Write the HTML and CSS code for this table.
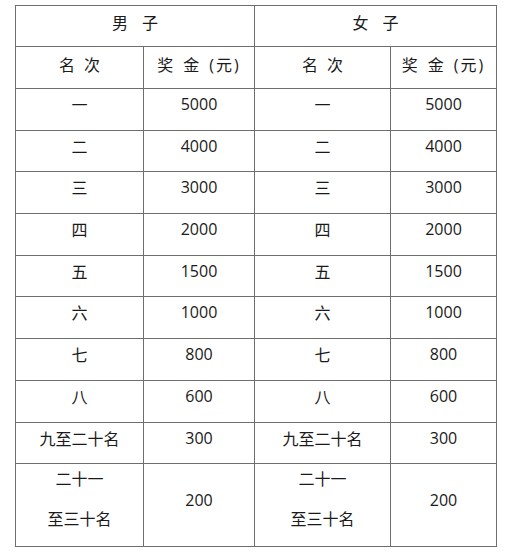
FILE: index.html
```html
<!DOCTYPE html>
<html lang="zh">
<head>
<meta charset="utf-8">
<link rel="stylesheet" href="styles.css">
</head>
<body>
<div class="table">
  <div class="cell head span2"><span class="ls14">男子</span></div>
  <div class="cell head span2"><span class="ls14">女子</span></div>

  <div class="cell head"><span class="ls9">名次</span></div>
  <div class="cell head"><span class="prize"><span class="g">奖</span><span class="g">金</span>(元)</span></div>
  <div class="cell head"><span class="ls9">名次</span></div>
  <div class="cell head"><span class="prize"><span class="g">奖</span><span class="g">金</span>(元)</span></div>

  <div class="cell">一</div><div class="cell">5000</div><div class="cell">一</div><div class="cell">5000</div>
  <div class="cell">二</div><div class="cell">4000</div><div class="cell">二</div><div class="cell">4000</div>
  <div class="cell">三</div><div class="cell">3000</div><div class="cell">三</div><div class="cell">3000</div>
  <div class="cell">四</div><div class="cell">2000</div><div class="cell">四</div><div class="cell">2000</div>
  <div class="cell">五</div><div class="cell">1500</div><div class="cell">五</div><div class="cell">1500</div>
  <div class="cell">六</div><div class="cell">1000</div><div class="cell">六</div><div class="cell">1000</div>
  <div class="cell">七</div><div class="cell">800</div><div class="cell">七</div><div class="cell">800</div>
  <div class="cell">八</div><div class="cell">600</div><div class="cell">八</div><div class="cell">600</div>
  <div class="cell">九至二十名</div><div class="cell">300</div><div class="cell">九至二十名</div><div class="cell">300</div>

  <div class="cell two"><span>二十一</span><span>至三十名</span></div>
  <div class="cell">200</div>
  <div class="cell two"><span>二十一</span><span>至三十名</span></div>
  <div class="cell">200</div>
</div>
</body>
</html>
```

FILE: styles.css
```css
html, body {
  margin: 0;
  padding: 0;
  background: #ffffff;
}

body {
  font-family: "Open Sans", "Noto Sans CJK SC", sans-serif;
  font-size: 16px;
  color: #1a1a1a;
}

.table {
  margin: 5px 0 0 15px;
  width: 482px;
  box-sizing: border-box;
  display: grid;
  grid-template-columns: 127px 110px 135px 105px;
  grid-template-rows: 40px 41px 41px 40px 41px 41px 40px 41px 41px 41px 40px 82px;
  gap: 1px;
  padding: 1px;
  background: #6e6e6e;
}

.cell {
  background: #ffffff;
  display: flex;
  align-items: center;
  justify-content: center;
  padding-bottom: 11px;
  box-sizing: border-box;
  white-space: nowrap;
}

.head {
  padding-bottom: 8px;
}

.span2 {
  grid-column: span 2;
}

.ls14 {
  letter-spacing: 14px;
  padding-left: 14px;
}

.ls9 {
  letter-spacing: 9px;
  padding-left: 9px;
}

.prize .g {
  margin-right: 8px;
}

.prize {
  letter-spacing: 2px;
}

.two {
  flex-direction: column;
  gap: 20px;
  padding-bottom: 12px;
}

.two span {
  line-height: 20px;
}
```
